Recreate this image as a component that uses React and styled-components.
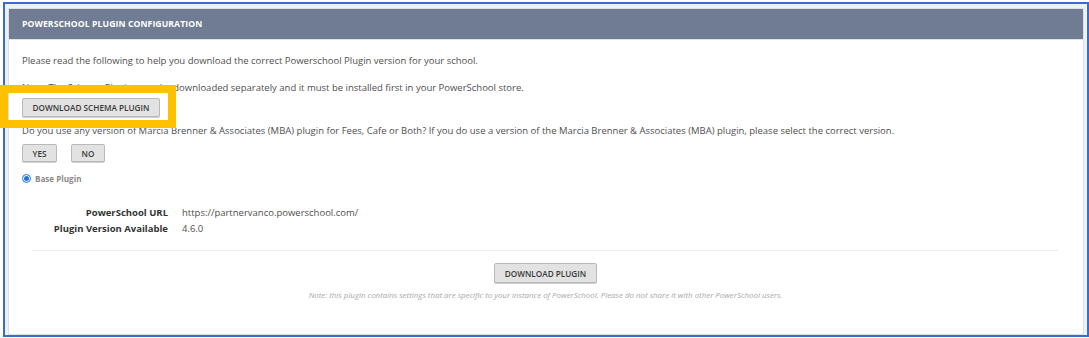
import React from "react";
import styled, { createGlobalStyle } from "styled-components";

const Global = createGlobalStyle`
  html, body { margin: 0; padding: 0; background: #ffffff; }
  body { font-family: "Open Sans", "Liberation Sans", sans-serif; width: 1089px; height: 338px; overflow: hidden; }
  * { box-sizing: border-box; }
`;

const Frame = styled.div`
  position: relative;
  margin: 2px 0 0 3px;
  width: 1086px;
  height: 335px;
  border: 2px solid #3b6ccc;
  background: #eef1f6;
  padding: 4px 3px 0 3px;
`;

const Panel = styled.section`
  height: 327px;
  background: #ffffff;
  border: 1px solid #dcdfe4;
  display: flex;
  flex-direction: column;
`;

const Header = styled.header`
  height: 31px;
  background: #6f7c94;
  border-bottom: 1px solid #dfe3ea;
  display: flex;
  align-items: center;
  padding-left: 13px;
  color: #ffffff;
  font-weight: 700;
  font-size: 8.65px;
  letter-spacing: 0.1px;
  text-transform: uppercase;
`;

const Body = styled.div`
  padding: 13px 14px 0 13px;
  color: #4f4f4f;
  font-size: 9.5px;
  display: flex;
  flex-direction: column;
`;

const Para = styled.p`
  margin: 0;
  line-height: 16px;
  margin-top: ${(p) => p.$mt || 0}px;
`;

const Button = styled.button`
  font-family: "Open Sans", "Liberation Sans", sans-serif;
  font-weight: 600;
  font-size: 8.2px;
  color: #3a3a3a;
  text-transform: uppercase;
  background: #e2e2e2;
  border: 1px solid #b9b9b9;
  border-radius: 2px;
  height: ${(p) => p.$h || 19}px;
  width: ${(p) => p.$w}px;
  padding: 0;
  box-shadow: 0 1px 0 #cfcfcf;
  cursor: pointer;
`;

const ButtonRow = styled.div`
  display: flex;
  gap: 14px;
  margin-top: ${(p) => p.$mt || 0}px;
`;

const RadioRow = styled.label`
  display: flex;
  align-items: center;
  gap: 4px;
  margin-top: 11px;
  font-size: 8.1px;
  font-weight: 700;
  color: #8a8a8a;
`;

const Radio = styled.span`
  width: 9px;
  height: 9px;
  border-radius: 50%;
  border: 1px solid #1a73e8;
  background: #fff;
  display: flex;
  align-items: center;
  justify-content: center;
  &::after {
    content: "";
    width: 5px;
    height: 5px;
    border-radius: 50%;
    background: #1a73e8;
  }
`;

const Details = styled.div`
  display: grid;
  grid-template-columns: 146px auto;
  column-gap: 14px;
  row-gap: 0;
  margin-top: 21px;
  line-height: 16px;
  justify-content: start;
`;

const Label = styled.span`
  text-align: right;
  font-weight: 700;
  color: #333333;
`;

const Value = styled.span`
  color: #4f4f4f;
`;

const Rule = styled.hr`
  border: 0;
  border-top: 1px solid #ececec;
  margin: 13px 11px 0 10px;
`;

const Footer = styled.div`
  display: flex;
  flex-direction: column;
  align-items: center;
  margin-top: 12px;
`;

const Note = styled.p`
  margin: 7px 0 0;
  font-size: 7.9px;
  font-style: italic;
  color: #a9a9a9;
`;

const Highlight = styled.div`
  position: absolute;
  left: -5px;
  top: 81px;
  width: 176px;
  height: 43px;
  border: 8px solid #ffc000;
  pointer-events: none;
`;

export default function App() {
  return (
    <>
      <Global />
      <Frame>
        <Panel>
          <Header>PowerSchool Plugin Configuration</Header>
          <Body>
            <Para>
              Please read the following to help you download the correct Powerschool Plugin version for your school.
            </Para>
            <Para $mt={11}>
              Note: The Schema Plugin must be downloaded separately and it must be installed first in your PowerSchool store.
            </Para>
            <ButtonRow $mt={2}>
              <Button $w={138}>Download Schema Plugin</Button>
            </ButtonRow>
            <Para $mt={6}>
              Do you use any version of Marcia Brenner &amp; Associates (MBA) plugin for Fees, Cafe or Both? If you do use a version of the Marcia Brenner &amp; Associates (MBA) plugin, please select the correct version.
            </Para>
            <ButtonRow $mt={5}>
              <Button $w={35} $h={18}>Yes</Button>
              <Button $w={34} $h={18}>No</Button>
            </ButtonRow>
            <RadioRow>
              <Radio />
              Base Plugin
            </RadioRow>
            <Details>
              <Label>PowerSchool URL</Label>
              <Value>https://partnervanco.powerschool.com/</Value>
              <Label>Plugin Version Available</Label>
              <Value>4.6.0</Value>
            </Details>
            <Rule />
            <Footer>
              <Button $w={103} $h={20}>Download Plugin</Button>
              <Note>
                Note: this plugin contains settings that are specific to your instance of PowerSchool. Please do not share it with other PowerSchool users.
              </Note>
            </Footer>
          </Body>
        </Panel>
        <Highlight />
      </Frame>
    </>
  );
}
